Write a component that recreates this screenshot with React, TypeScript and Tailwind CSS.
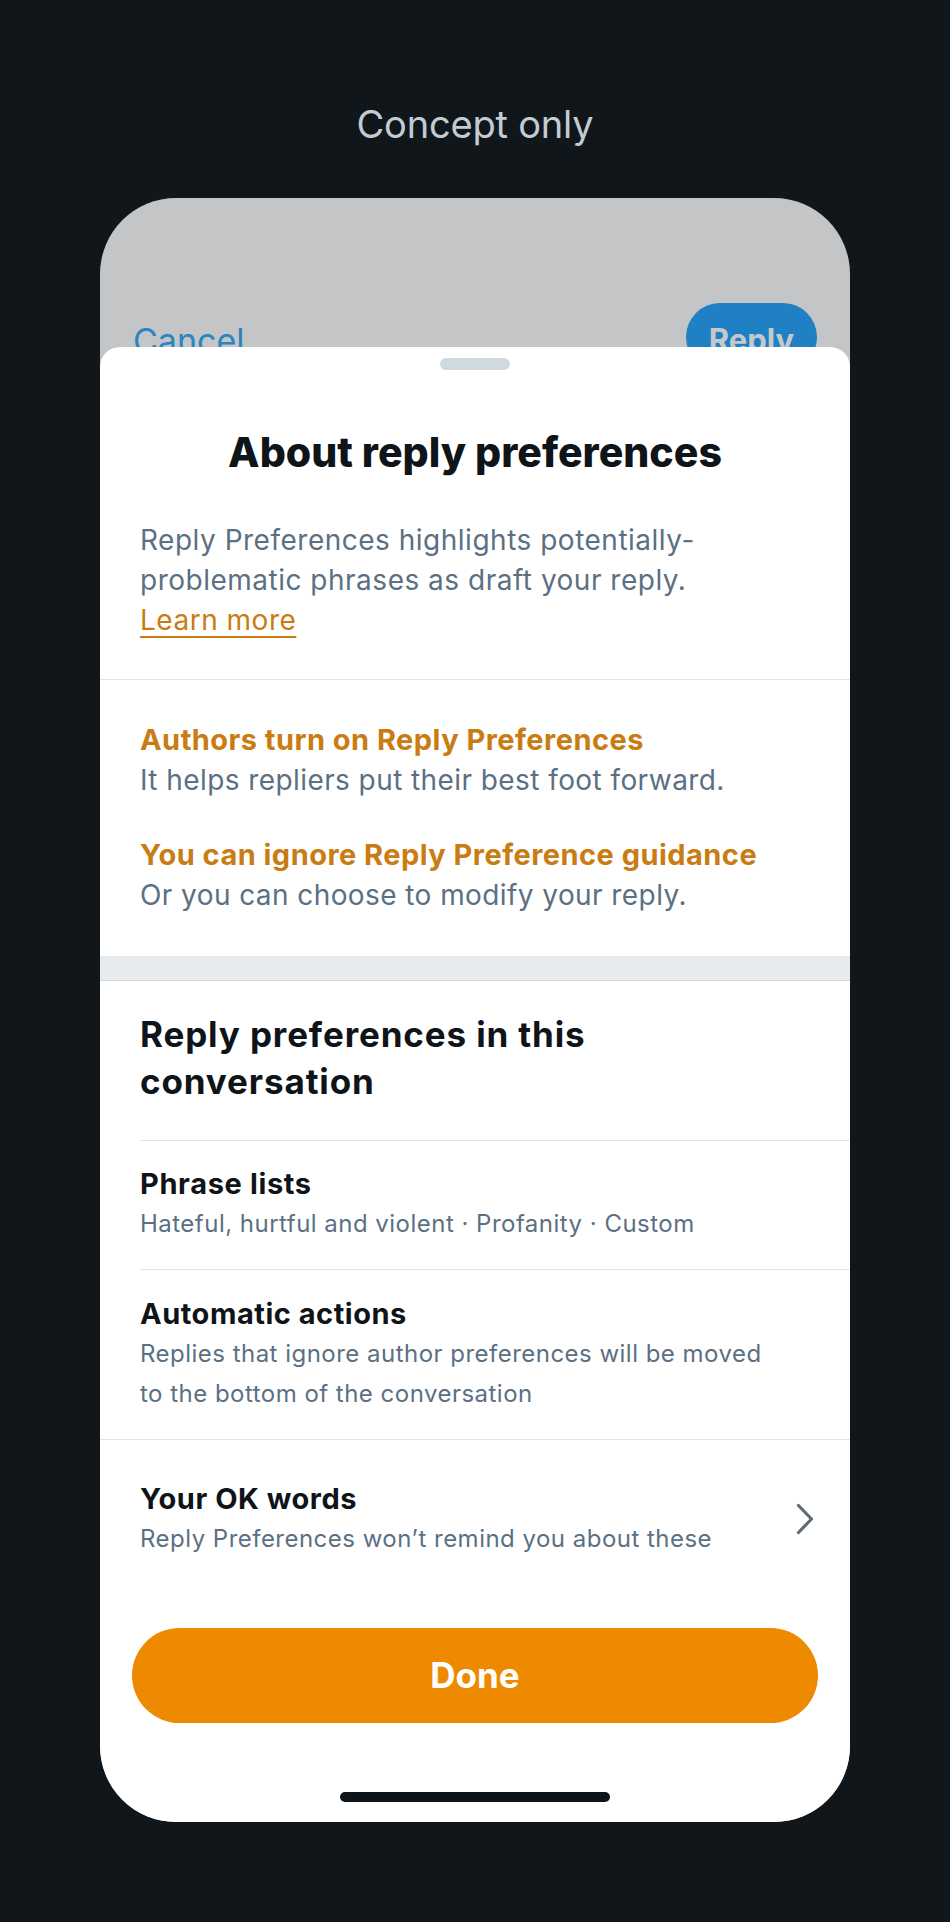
const points = [
  { title: "Authors turn on Reply Preferences", body: "It helps repliers put their best foot forward." },
  { title: "You can ignore Reply Preference guidance", body: "Or you can choose to modify your reply." },
];

function Chevron() {
  return (
    <svg width="18" height="32" viewBox="0 0 18 32" fill="none" className="shrink-0">
      <polyline points="2.5,2.5 15.5,16 2.5,29.5" stroke="#5b6b7a" strokeWidth="3.2" strokeLinecap="round" strokeLinejoin="round" />
    </svg>
  );
}

export default function App() {
  return (
    <div className="min-h-screen bg-[#11161b] font-['Inter','Noto_Sans',sans-serif] pt-[101px] pb-[100px]">
      <p className="text-center text-[38px] leading-[46px] text-[#c2ccd4] tracking-[-0.005em]">Concept only</p>

      {/* phone */}
      <div className="mx-[100px] mt-[51px] rounded-[76px] bg-[#c4c5c7] overflow-hidden">
        {/* compose screen behind the sheet */}
        <div className="h-[149px] overflow-hidden flex items-start justify-between pl-[33px] pr-[33px] pt-[105px]">
          <span className="mt-[17px] text-[34px] leading-[42px] text-[#2a85c0]">Cancel</span>
          <span className="h-[68px] w-[131px] rounded-full bg-[#1f80c4] flex items-center justify-center text-[31px] font-bold text-[#c5c9cc] pt-[6px]">
            Reply
          </span>
        </div>

        {/* sheet */}
        <div className="bg-white rounded-t-[20px] flex flex-col">
          <div className="pt-[11px] flex justify-center">
            <div className="w-[70px] h-[12px] rounded-full bg-[#cfd9e0]" />
          </div>

          <h1 className="mt-[58px] text-center text-[41px] leading-[48px] font-extrabold tracking-[0em] text-[#0f1419]">
            About reply preferences
          </h1>

          <div className="mt-[44px] px-10 pb-[39px] border-b border-[#dfe3e7]">
            <p className="text-[28px] leading-[40px] tracking-[0.018em] text-[#5b7083]">
              Reply Preferences highlights potentially-
              <br />
              problematic phrases as draft your reply.
              <br />
              <span className="text-[#c97c12] underline decoration-[2px] underline-offset-[6px]">Learn more</span>
            </p>
          </div>

          <div className="px-10 pt-[40px] pb-[41px] flex flex-col gap-[35px]">
            {points.map((p) => (
              <div key={p.title}>
                <p className="text-[29px] leading-[40px] font-bold tracking-[0.016em] text-[#c97c12]">{p.title}</p>
                <p className="text-[28px] leading-[40px] tracking-[0.015em] text-[#5b7083]">{p.body}</p>
              </div>
            ))}
          </div>

          <div className="h-[25px] bg-[#e8ebee] border-t border-t-[#e3e6e9] border-b border-b-[#cfd4d9]" />

          <h2 className="px-10 pt-[30px] pb-[35px] text-[35px] leading-[47px] font-bold tracking-[0.025em] text-[#0f1419]">
            Reply preferences in this
            <br />
            conversation
          </h2>

          <div className="ml-10 border-t border-[#dfe3e7] pt-[23px] pb-[25px] pr-10">
            <p className="text-[29px] leading-[40px] font-bold tracking-[0.022em] text-[#0f1419]">Phrase lists</p>
            <p className="text-[24px] leading-[40px] tracking-[0.02em] text-[#5b7083]">Hateful, hurtful and violent · Profanity · Custom</p>
          </div>

          <div className="ml-10 border-t border-[#dfe3e7] pt-[24px] pb-[25px] pr-10">
            <p className="text-[29px] leading-[40px] font-bold tracking-[0.018em] text-[#0f1419]">Automatic actions</p>
            <p className="text-[24px] leading-[40px] tracking-[0.02em] text-[#5b7083]">
              Replies that ignore author preferences will be moved
              <br />
              to the bottom of the conversation
            </p>
          </div>

          <div className="border-t border-[#dfe3e7] pt-[39px] pl-10 pr-[36px] flex items-center justify-between">
            <div>
              <p className="text-[29px] leading-[40px] font-bold tracking-[0.018em] text-[#0f1419]">Your OK words</p>
              <p className="text-[24px] leading-[40px] tracking-[0.02em] text-[#5b7083]">Reply Preferences won’t remind you about these</p>
            </div>
            <Chevron />
          </div>

          <button className="mx-8 mt-[69px] h-[95px] rounded-full bg-[#ee8a00] text-white text-[35px] font-bold">
            Done
          </button>

          <div className="mt-[69px] mb-[20px] mx-auto w-[270px] h-[10px] rounded-full bg-[#0f1419]" />
        </div>
      </div>
    </div>
  );
}
